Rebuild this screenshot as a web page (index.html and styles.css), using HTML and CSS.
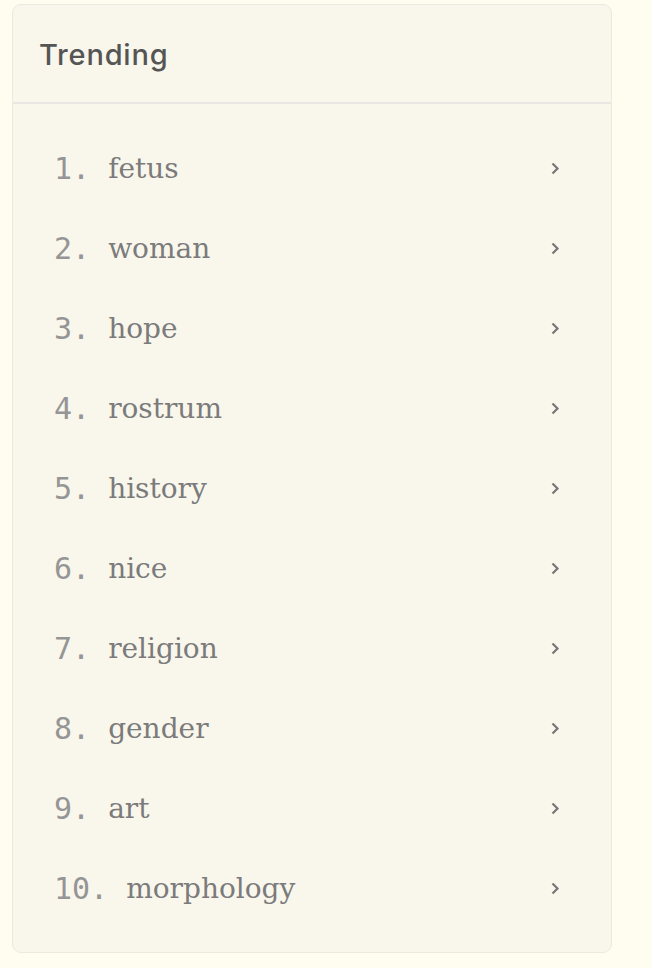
FILE: index.html
```html
<!DOCTYPE html>
<html>
<head>
<meta charset="utf-8">
<link rel="stylesheet" href="styles.css">
</head>
<body>
<div class="card">
  <div class="card-header">Trending</div>
  <ol class="list">
    <li class="item"><span class="num">1.</span><span class="word">fetus</span><svg class="chev" viewBox="0 0 9 13"><path d="M1.5 1.5l5 5-5 5"/></svg></li>
    <li class="item"><span class="num">2.</span><span class="word">woman</span><svg class="chev" viewBox="0 0 9 13"><path d="M1.5 1.5l5 5-5 5"/></svg></li>
    <li class="item"><span class="num">3.</span><span class="word">hope</span><svg class="chev" viewBox="0 0 9 13"><path d="M1.5 1.5l5 5-5 5"/></svg></li>
    <li class="item"><span class="num">4.</span><span class="word">rostrum</span><svg class="chev" viewBox="0 0 9 13"><path d="M1.5 1.5l5 5-5 5"/></svg></li>
    <li class="item"><span class="num">5.</span><span class="word">history</span><svg class="chev" viewBox="0 0 9 13"><path d="M1.5 1.5l5 5-5 5"/></svg></li>
    <li class="item"><span class="num">6.</span><span class="word">nice</span><svg class="chev" viewBox="0 0 9 13"><path d="M1.5 1.5l5 5-5 5"/></svg></li>
    <li class="item"><span class="num">7.</span><span class="word">religion</span><svg class="chev" viewBox="0 0 9 13"><path d="M1.5 1.5l5 5-5 5"/></svg></li>
    <li class="item"><span class="num">8.</span><span class="word">gender</span><svg class="chev" viewBox="0 0 9 13"><path d="M1.5 1.5l5 5-5 5"/></svg></li>
    <li class="item"><span class="num">9.</span><span class="word">art</span><svg class="chev" viewBox="0 0 9 13"><path d="M1.5 1.5l5 5-5 5"/></svg></li>
    <li class="item"><span class="num">10.</span><span class="word">morphology</span><svg class="chev" viewBox="0 0 9 13"><path d="M1.5 1.5l5 5-5 5"/></svg></li>
  </ol>
</div>
</body>
</html>
```
FILE: styles.css
```css
html, body {
  margin: 0;
  padding: 0;
  background: #fffcf0;
}
body {
  padding: 4px 40px 15px 12px;
}
.card {
  width: 600px;
  background: #f9f6ec;
  border: 1px solid #ede9df;
  border-radius: 9px;
  box-sizing: border-box;
  overflow: hidden;
}
.card-header {
  height: 99px;
  box-sizing: border-box;
  padding: 33px 0 0 26px;
  font-family: "Inter", "Liberation Sans", sans-serif;
  font-size: 29px;
  font-weight: 500;
  letter-spacing: 0.8px;
  color: #555;
  line-height: 34px;
  border-bottom: 2px solid #e9e7e3;
}
.list {
  list-style: none;
  margin: 0;
  padding: 24px 0 24px 0;
}
.item {
  height: 80px;
  display: flex;
  align-items: center;
  padding: 0 51px 0 41px;
}
.num {
  font-family: "DejaVu Sans Mono", monospace;
  font-size: 30px;
  color: #959595;
  margin-right: 18px;
}
.word {
  flex: 1;
  font-family: "DejaVu Serif", serif;
  font-size: 28px;
  color: #7b7b7b;
}
.chev {
  width: 9px;
  height: 13px;
  fill: none;
  stroke: #777;
  stroke-width: 2.2;
}
```
